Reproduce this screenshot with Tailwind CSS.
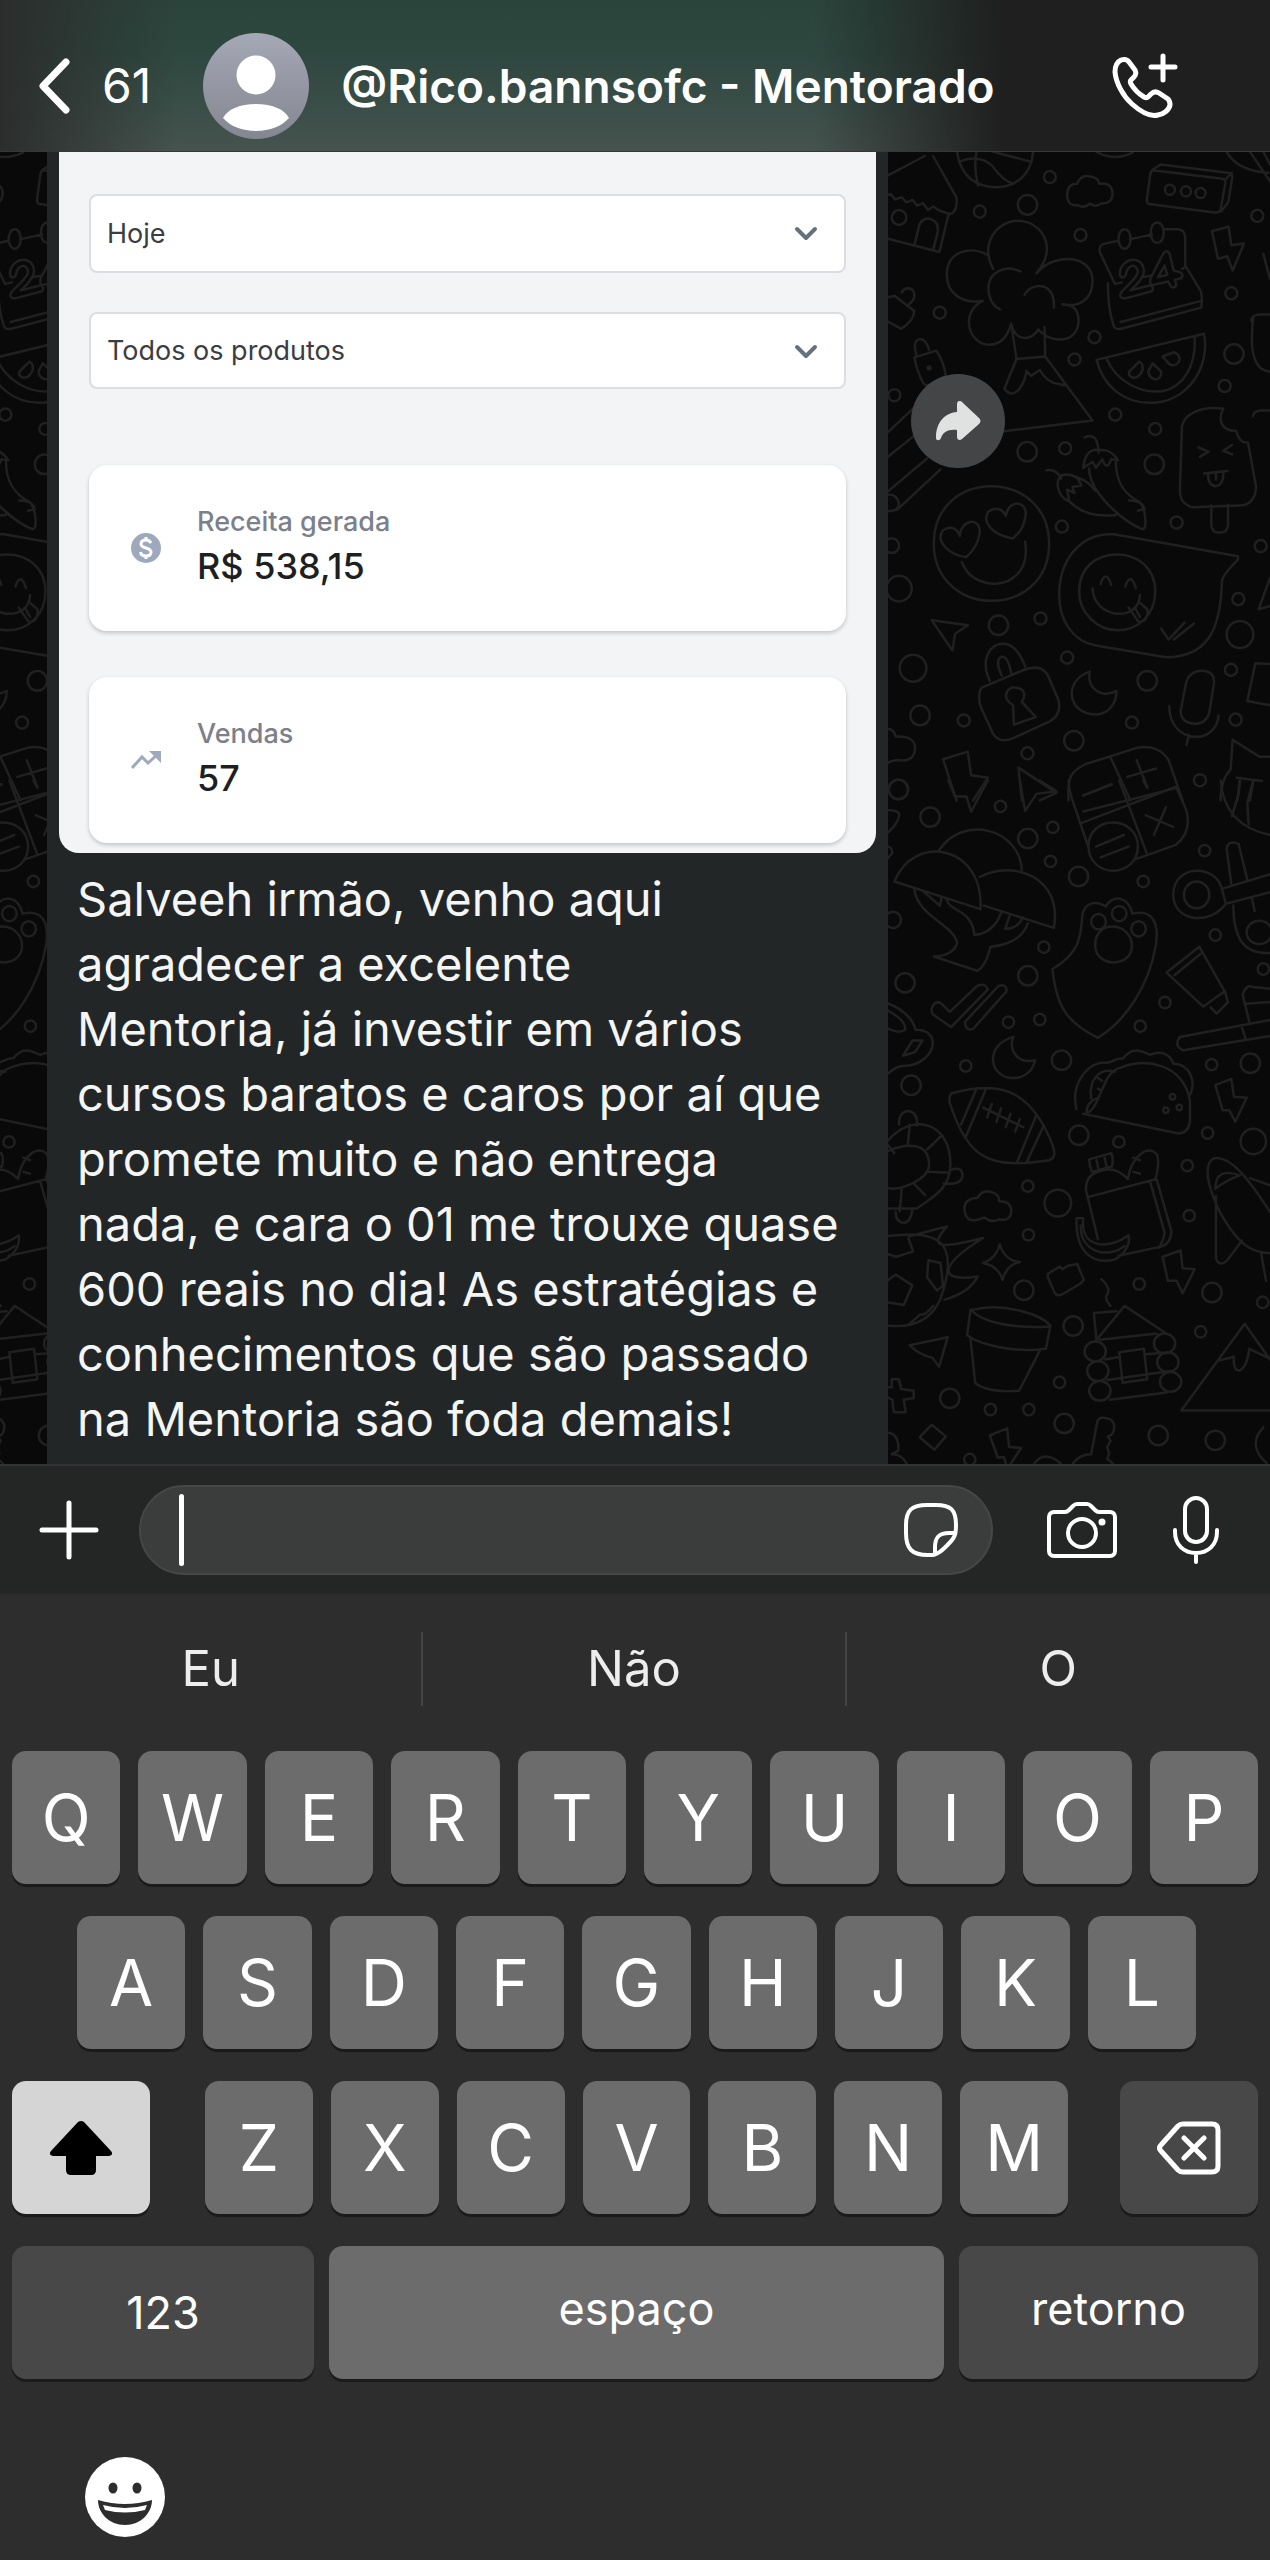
<!DOCTYPE html>
<html lang="pt-BR">
<head>
<meta charset="utf-8">
<meta name="viewport" content="width=device-width, initial-scale=1">
<title>@Rico.bannsofc - Mentorado</title>
<script src="https://cdn.jsdelivr.net/npm/@tailwindcss/browser@4"></script>
</head>
<body class="bg-[#2d2d2d] font-['Inter',sans-serif] text-white">
<div class="flex min-h-screen flex-col">

  <!-- Conversation header -->
  <header class="flex h-[152px] items-center border-b border-[#343837] bg-[linear-gradient(to_right,#2b2d2c_0%,transparent_14%,transparent_64%,#1f1f1f_79%),linear-gradient(to_bottom,#2b443b_0%,#2d473f_35%,#46534f_100%)] pt-5 pr-[92px] pl-[38px]">
    <a href="#" class="flex items-center gap-8" aria-label="Voltar, 61 conversas">
      <svg class="h-14 w-8" viewBox="0 0 32 56" fill="none" stroke="#fff" stroke-width="7" stroke-linecap="round" stroke-linejoin="round"><path d="M28 4 5 28l23 24"/></svg>
      <span class="text-[48px] leading-none">61</span>
    </a>
    <svg class="ml-[52px] size-[106px] shrink-0" viewBox="0 0 106 106">
      <defs><linearGradient id="av" x1="0" y1="0" x2="0" y2="1"><stop offset="0" stop-color="#a5a8b5"/><stop offset="1" stop-color="#848791"/></linearGradient></defs>
      <circle cx="53" cy="53" r="53" fill="url(#av)"/>
      <circle cx="53" cy="42" r="19.500" fill="#fff"/>
      <path d="M20 85c5-9 17-14 33-14s28 5 33 14c-7 8-19 13-33 13s-26-5-33-13z" fill="#fff"/>
    </svg>
    <h1 class="ml-8 flex-1 text-[46px] leading-none font-semibold whitespace-nowrap">@Rico.bannsofc - Mentorado</h1>
    <button aria-label="Ligar" class="size-[66px] shrink-0">
      <svg viewBox="0 0 66 66" fill="none" stroke="#fff" stroke-width="5" stroke-linecap="round" stroke-linejoin="round">
        <path d="M51 3v24M39 14h24"/>
        <path d="M9 7C5 9 3 13 3 19c1 11 8 24 17 32 9 8 19 13 26 11 6-1 11-5 12-10 0-3 0-4-2-6l-9-6c-3-2-6-1-8 1l-3 3c-1 1-2 1-4 0-5-3-10-8-13-13-1-2-1-3 0-4l3-3c2-2 2-5 1-7l-6-8c-2-3-5-3-8-2z"/>
      </svg>
    </button>
  </header>

  <!-- Messages -->
  <main class="relative flex overflow-hidden bg-[#090909] pl-[47px]">
    <svg id="wall" class="absolute inset-0 size-full" viewBox="0 152 1270 1311" preserveAspectRatio="xMaxYMin slice" fill="none" stroke="#202020" stroke-width="2.500" stroke-linejoin="round" stroke-linecap="round" aria-hidden="true">
      <g id="tile">
        <g id="upper" transform="translate(870 140) scale(.33333 .42091)">
          <path vector-effect="non-scaling-stroke" d="M52 85 165 38M190 38l70 98q5 35-20 40l-30-8-20-10-15 8-15-16-18 6-14-14-18 6-14-12-20 5-12-12-14 2M52 234l157 32 28-92M135 246l14-45q12-20 38-12 22 8 16 32l-12 38M262 28c10 60 60 84 118 84s105-30 110-84M325 108q-14-40-5-80M268 52q60-20 100 10 30 34 62 42M370 28l115 24M680 28q50 24 108 2M1070 28q30 44 125 50M1140 28l60 70M1180 28l20 30"/>
          <path vector-effect="non-scaling-stroke" d="M592 130q0-26 30-26 10-22 36-18 28 2 30 18 38-4 40 22 0 26-34 25-18 10-35 0-14 12-34 4-34 2-33-25zM848 72l210 20q10 2 8 12l-14 60q-4 10-20 8L838 152q-8-2-7-12l10-58q2-10 12-14l20-10 200 20q16 2 14 10l-12 60-22 22M1066 94l20-16"/>
          <path vector-effect="non-scaling-stroke" d="M370 306c-40-60 10-114 75-114s125 60 55 124M356 274c-50-24-125-12-125 46 0 46 50 70 108 62M338 382c-70 30-40 104 20 104 34 0 56-20 66-50 14 46 60 40 82 14 40 38 120 30 120-20 0-30-20-40-48-40 60 10 90-20 90-56 0-60-110-70-168-18M452 312c-50-18-96 4-96 40 0 24 14 44 36 50M464 368c24-34 94-30 88 30M425 440l15 80-36 70q20 24 46 0 18-22 20-42l14 12 26-14q20 30 60 34l14 2M440 520l86-6-2-70M526 514l142 152-270 26"/>
          <path vector-effect="non-scaling-stroke" d="m735 342-45-76q-4-18 16-20l36-6M780 236l66-12M884 212h40q20 0 22 20v66l46 60q6 12 2 40l-240 50q-20 4-24-10-16-40-16-98M735 342l20-4M815 326l30-4M936 306l10-4M752 432l242-50M764 212c24 0 24 46 0 46s-24-46 0-46zM862 196c26 0 26 48 0 48s-26-48 0-48z"/>
          <path vector-effect="non-scaling-stroke" d="M750 317c0-36 68-48 72-6 0 16-20 32-40 46l60-12q12 4 4 14l-80 17q-22 0-12-14c20-20 46-32 50-48-4-24-32-18-36 6-6 10-18 8-18-3zM880 270l-38 58q-4 18 8 16l45-8 8 12q10 6 16-4l-4-12 20-4q6-10-4-14l-20-4-12-40q-10-12-19 0zM884 298l-20 28 28-6z"/>
          <path vector-effect="non-scaling-stroke" d="m1026 216 50-10 8 44 38-4-34 64-16-34-28 6zM680 522l322-62c20 80-50 164-162 164-80 0-140-40-160-102zM710 520c30 52 100 84 170 76 60-10 100-60 94-130M778 550l30-24q12 4 10 20-10 20-30 18-14-4-10-14zM848 530l26 20q0 20-20 18-20-6-18-20zM878 514l34-10q20 6 16 20-10 16-30 8z"/>
          <path vector-effect="non-scaling-stroke" d="m52 374 22-4 60 36q-2 24-40 42l-42-18M96 362q10-14 30-8 14 10 4 26l-14 12M134 516l66-16q24 30 28 60l-40 20q-18 8-28-4-20-30-26-60zM140 510q-12-30 6-36 20-6 32 24M52 696l80-60M52 754l110-70M52 836l120-80M82 878l130-96M52 842q30-2 36 22-4 20-36 16"/>
          <path vector-effect="non-scaling-stroke" d="M192 958c0-86 80-136 172-136s174 50 174 136-80 136-172 136S192 1044 192 958zM290 990c-60-6-90-40-72-62 20-14 44-8 52 12 4-40 62-46 60-8-4 24-20 44-40 58zM428 946c-70-10-90-44-72-64 24-14 44-4 52 10 8-38 60-38 60-4-6 34-20 46-40 58zM276 1002c30 60 120 60 152 38 40-20 44-54 38-86"/>
          <path vector-effect="non-scaling-stroke" d="M644 706q40-14 42 36M640 778q6-50 56-42 30 0 48 24l-20-2q-14 30-26 0l-20 20-10-14zM658 780c0 60 110 130 160 144 16 0 8-50-8-64-50-20-72-50-72-96M778 856q40 0 46 20l-20 4M530 784q30-4 44 20M598 858c-40-12-46-60-14-64q40-2 50 26l-26 4 6 14-22-8zM598 858q50 40 140 32M584 794q60 4 92 38"/>
          <path vector-effect="non-scaling-stroke" d="M936 680c6-30 60-50 124-42-20 30 0 54 38 52 8 20 16 30 36 28l24 104c0 30-20 46-50 46l-140 4q-38-8-38-40zM1024 868v44q0 20 24 20 26 0 26-20v-46M986 730l30 10-26 12M1086 724l-26 14 26 8M1002 792l70-6M1014 792q0 30 24 30 24-4 22-34M1038 790v16"/>
          <path vector-effect="non-scaling-stroke" d="m1104 988-372-52c-110-4-164 70-164 144 0 60 40 110 110 120l210 28c120 0 164-60 168-180q0-14 48-52zM628 1072c0-60 56-88 114-88s114 30 114 88-56 92-114 92-114-40-114-92zM692 1054q16-36 32 2M766 1060q16-36 32 4M668 1064c4 74 140 82 142 16M776 1110l30 34q30 0 26-30l-20-14M796 1112l14 20M874 1160l22 26 48-40M912 1186l60-38"/>
          <path vector-effect="non-scaling-stroke" d="M186 1140l108 12-38 20-8 40zM360 1284c-30-50 0-88 40-88 30 0 50 20 66 54M396 1272c-30-50 10-56 20-30l10 26M336 1300l120-40q60-20 80 14l30 56q10 34-26 50l-110 40q-40 14-60-10l-38-66q-10-30 4-44zM430 1342c-40-20-14-44 4-42 34 0 34 20 22 34l42 36-66 18zM660 1262c-80 20-70 102 20 102 40-2 60-30 60-56-50 20-90-10-80-46zM948 1290q10-30 48-30 38 0 36 30l-14 70q-10 26-44 26-40-2-42-30zM898 1344c0 90 140 96 148 22M956 1412l-6 24M1200 1244l-44-2-24 90 68 10"/>
          <path vector-effect="non-scaling-stroke" d="m220 1470 74-18 10 56 50 6-44 54M220 1470l40 98M446 1490l114 60-50 18M446 1490l10 78M596 1568c-4-60 10-70 50-86l160-40q60-6 90 30l42 96M722 1466l60 102M640 1556l86-26M772 1512l86-20M800 1472l32 64M640 1594l280-56M52 1398q20 0 26 18 58-2 58 28-2 34-50 28-20 0-34 8M1052 1568q0-50 30-74l6-70 80 40h32M1100 1514l76 8M1110 1516l-8 52M1150 1520l-10 48M1200 550q-70-4-50-130M1144 430q0-16 30-16h26M1148 656q4-14 26-14h26M1180 270l20 60M1200 1040l-34 74 34-8"/>
        </g>
        <g id="lower" transform="translate(870 780) scale(.33333 .44643)">
          <path vector-effect="non-scaling-stroke" d="m236 0 20 36h34l14 34 50-70M450 0l16 68 34-38 60-6-50-24M596 0q0 20 10 40l50 110M632 96l286-82M748 0l82 162M640 34l84-26M820 0l12 16M918 14l30 50q20 50-30 80l-120 32M828 78l82 26M888 60l-36 62M656 148c0-36 36-54 74-54s74 20 74 54-36 54-74 54-74-20-74-54zM678 148l84-26M692 172l84-24M1052 0q10 100 148 122M1110 0l-4 30-20 50M1150 0l-18 50 4 48"/>
          <path vector-effect="non-scaling-stroke" d="M208 156c70-80 240-50 248 44M74 226c60-110 270-80 258 62zM330 216c100-40 250 0 222 114l-210-50M134 244c10 60 120 80 128 120-6 20-40 30-70 30l130 32q26-10 40-54 90-6 112-52M160 248l50 32 6-18M230 266c10 30 76 20 84 80 50-4 70-30 80-50M420 302l-14 30q40 0 52-26M52 66q40 0 36 14-6 20-36 38M52 148q14 0 16 14l-16 14"/>
          <path vector-effect="non-scaling-stroke" d="M548 422c90-40 84-80 90-124 10-26 40-30 70-16 20-26 66-26 80 16 60-10 80 20 70 70-20 90-90 170-174 208-80-30-124-60-136-154zM676 368c0-60 110-50 110 2 0 50-110 50-110-2z"/>
          <path vector-effect="non-scaling-stroke" d="M664 316a22 17 0 1 0 44 0 22 17 0 1 0-44 0M726 298a22 17 0 1 0 44 0 22 17 0 1 0-44 0M784 332a22 17 0 1 0 44 0 22 17 0 1 0-44 0M942 256a38 30 0 1 0 76 0 38 30 0 1 0-76 0M1130 340a38 26 0 1 0 76 0 38 26 0 1 0-76 0M910 256c0-70 130-70 146-12l12 32c-50 50-158 40-158-20zM1058 242l142-32M1068 276l132-26M1084 232l-14-80q4-20 36-10l26 80M1090 280c0 60 20 110 110 106M1146 264l8 28"/>
          <path vector-effect="non-scaling-stroke" d="m890 430 98-58 76 100-64 34zM914 436l78-48M1064 470l10 26-34 26-18-14M930 574l270-38M930 574q-20 20 10 30l260-32M1114 548l12 28M1138 540l-20-60q10-24 30-18l52 4M1126 500l74-4M186 510q10-20 30-10l24 18 82-58q26-8 32 8l-110 84-54-28q-6-6-4-14zM286 540l100-80q26-6 24 12l-100 84q-24 6-24-16z"/>
          <path vector-effect="non-scaling-stroke" d="M52 498q70 20 86 60c80 0 60 70-20 80-40 0-50 10-66 20M52 514q60 24 54 44-20 10-54-4M100 616l28-34h30l-22 26zM430 574c-90 20-70 92 0 92 40 0 60-20 66-40-50 10-80-20-66-52z"/>
          <path vector-effect="non-scaling-stroke" d="M246 700c120-24 230-24 302 116 10 20 6 30-10 34-180 20-240 0-298-128q-4-16 6-22zM320 690l-46 80M350 688l-62 110M498 752l-56 102M522 772l-50 80M340 732l120 44M366 724l-14 30M394 734l-14 30M422 746l-14 30M450 758l-14 28"/>
          <path vector-effect="non-scaling-stroke" d="M620 736c-20-60 40-110 90-104 20 0 20-10 50-10 30-30 60-14 80-8 30-10 60-4 70 20 50 0 70 40 50 70M640 746c50 0 50-80 100-100 90-30 200-10 220 70v48q-6 26-34 26zM736 652c-50-10-80 20-72 60M650 744c0-20 20-30 36-34M682 664l14 8M684 690l12 4"/>
          <path vector-effect="non-scaling-stroke" d="M52 808c80-70 190-40 190 50 0 60-60 76-100 100H52M52 830c60-20 126-20 126 30 0 30-80 60-126 52M120 770l-6 48M214 796l-42 30M176 876l64 2M132 902l34 26M96 916l-6 48M52 814l22 20M88 770q0-30 30-30 26 4 24 32M240 872q40-10 38 14-4 20-56 16M78 966q0 24 26 24 20-2 24-30"/>
          <path vector-effect="non-scaling-stroke" d="M284 956q2-20 40-22 14-20 44-12 20 4 20 20 40 0 36 26-6 20-36 14-20 10-44-4-60 20-60-22zM52 1020c120-10 232-10 160 140q-40 70-160 60M52 1060l28 6 50-12-14-30M52 1120l26-14 50 24-26 44-50-6M176 1074l36 6 8 50-18 12-30-30zM120 1216l30-20q20 0 40-20M120 1020l112-22c-60 50-20 50 108 26-130 60-140 100-16 86-20 30-60 44-100 52M390 1038q14 36 60 40-40 6-52 40-10-30-58-38 40-10 50-42z"/>
          <path vector-effect="non-scaling-stroke" d="m658 848 66-14q8 14 2 30l-60 12q-8-14-8-28zM680 850l6 20M704 844l6 20M684 1026l-36-110q0-30 30-38 54-20 96 14M656 932l204-40 44 116q0 30-34 36l-124 20M840 896l44 116q-4 20-18 34M774 892c10-50 60-80 88-54 8 20 0 40-6 56M810 850l-20-6M810 880l-20-4M620 980h20c-10 70 80 70 136 38 6 20-10 40-40 54-60 12-120-10-116-92zM632 996c0 60 80 76 132 46"/>
          <path vector-effect="non-scaling-stroke" d="m534 1104 36-16 8 6 16-8 28-4 20 36-10 8-54 24q-18 6-24-4l-20-34zM694 1116q30 20 18 34-10 10 10 26M878 1066l54-14 6 40 36 2-36 54-18-28h-26zM302 1186c100-20 210 10 240 34l-14 52c-100 10-200-10-236-30zM304 1184c30 30 140 44 236 38M302 1248l14 100c30 20 90 20 132 18l62-90"/>
          <path vector-effect="non-scaling-stroke" d="m680 1252-8-60 68-4M678 1254l86-78 130 64M690 1252l170-14M706 1296l44-6M712 1342l190-20M720 1386l170-16M826 1284l40-2M748 1280l74-8 10 68-74 8zM644 1278a32 22 0 1 0 64 0 32 22 0 1 0-64 0M652 1322a32 22 0 1 0 64 0 32 22 0 1 0-64 0M658 1366a32 22 0 1 0 64 0 32 22 0 1 0-64 0M852 1260a32 22 0 1 0 64 0 32 22 0 1 0-64 0M862 1302a32 22 0 1 0 64 0 32 22 0 1 0-64 0M870 1346a32 22 0 1 0 64 0 32 22 0 1 0-64 0M1200 1410H934l190-194 76 80M1050 1298l42-8q-4 34 20 30 20-10 26-48l62 22"/>
          <path vector-effect="non-scaling-stroke" d="M1200 966c-60-70-120-130-170-120-40 20 0 90 20 120 60 80 100 90 150 92M1038 930v140q10 20 34 4l44-44M1036 914q0-50 74-30-40 10-74 30zM1140 890l60 16M1174 1060l14 60M120 1264l114-18-26 66-20-20q-40-6-68-28zM52 1358h14v-18h22l6 22 38 4v16l-30 4 6 28H72l-4-28-16-6M186 1442l42 26-34 30-44-28zM360 1466l52-16 6 42 36 2-32 36M360 1466l24 50 18-2 6 14M610 1528q20-20 54-20l18-72q6-16 40-6 20 14 4 34l-12 4 8 10-10 14 6 14-6 12 16 10M52 1460q36 0 34 40l-20 8q30 0 44 20M494 1528q30-30 78 0M1180 1448q-50 40 10 80M1036 682l48-14 8 40 38 2-34 54-18-26h-20z"/>
        </g>
      </g>
      <use href="#tile" x="-1109"/>
    </svg>

    <article class="relative min-w-0 flex-1 bg-[#232627] px-3">
      <div class="rounded-b-[20px] bg-[#f2f4f6] px-[30px] pt-[42px] pb-[10px] text-[#3b3d42]">
        <div class="relative">
          <select id="periodo" aria-label="Período" class="h-[79px] w-full appearance-none rounded-lg border-2 border-[#dcdde1] bg-white px-4 pt-[2px] text-[27px]"><option>Hoje</option></select>
          <svg class="pointer-events-none absolute top-8 right-7 h-4 w-6" viewBox="0 0 24 16" fill="none" stroke="#667180" stroke-width="4" stroke-linecap="round" stroke-linejoin="round"><path d="m3 3 9 9 9-9"/></svg>
        </div>
        <div class="relative mt-[39px]">
          <select id="produto" aria-label="Produto" class="h-[77px] w-full appearance-none rounded-lg border-2 border-[#dcdde1] bg-white px-4 pt-[2px] text-[27px]"><option>Todos os produtos</option></select>
          <svg class="pointer-events-none absolute top-8 right-7 h-4 w-6" viewBox="0 0 24 16" fill="none" stroke="#667180" stroke-width="4" stroke-linecap="round" stroke-linejoin="round"><path d="m3 3 9 9 9-9"/></svg>
        </div>
        <dl class="mt-[76px] grid gap-[46px]">
          <div class="flex h-[166px] items-center gap-9 rounded-[18px] bg-white pl-[42px] shadow-[0_2px_4px_#0003]">
            <svg class="size-[30px]" viewBox="0 0 30 30"><circle cx="15" cy="15" r="15" fill="#9ea9bd"/><path d="M20 10c-1-2-3-3-5-3-3 0-5 1.500-5 4 0 5 10 3 10 8 0 2.500-2 4-5 4s-5-1-5.500-4M15 4v4M15 22v4" fill="none" stroke="#fff" stroke-width="3"/></svg>
            <div>
              <dt class="text-[27px] leading-9 font-medium text-[#7b808b]">Receita gerada</dt>
              <dd class="text-[36px] leading-[52px] font-medium text-[#1e1f22]">R$ 538,15</dd>
            </div>
          </div>
          <div class="flex h-[166px] items-center gap-9 rounded-[18px] bg-white pl-[42px] shadow-[0_2px_4px_#0003]">
            <svg class="size-[30px]" viewBox="0 0 30 30" fill="none" stroke="#9ea9bd" stroke-width="3"><path d="m1 23 10-11 6 6L28 8"/><path d="M18 6h12v12z" fill="#9ea9bd" stroke="none"/></svg>
            <div>
              <dt class="text-[27px] leading-9 font-medium text-[#7b808b]">Vendas</dt>
              <dd class="text-[36px] leading-[52px] font-medium text-[#1e1f22]">57</dd>
            </div>
          </div>
        </dl>
      </div>
      <p class="pt-[13px] pb-[13px] pl-[18px] text-[47px] leading-[65px] whitespace-nowrap text-[#f4f5f5]">Salveeh irmão, venho aqui<br>agradecer a excelente<br>Mentoria, já investir em vários<br>cursos baratos e caros por aí que<br>promete muito e não entrega<br>nada, e cara o 01 me trouxe quase<br>600 reais no dia! As estratégias e<br>conhecimentos que são passado<br>na Mentoria são foda demais!</p>
    </article>

    <div class="relative w-[382px] shrink-0 pt-[222px] pl-[23px]">
      <button aria-label="Encaminhar" class="flex size-[94px] items-center justify-center rounded-full bg-[#444547]">
        <svg class="h-10 w-[46px]" viewBox="0 0 46 40" fill="#e0e2e2"><path d="M1 37C1 22 9 12 22 11V3c0-3 3-4 5-2l17 16c2 2 2 4 0 6L27 38c-2 2-5 1-5-2v-7C13 28 8 31 6 37c-1 3-5 3-5 0z"/></svg>
      </button>
    </div>
  </main>

  <!-- Composer -->
  <form class="flex h-[130px] items-center border-t-2 border-[#303434] bg-[#232625] pr-[51px] pl-[39px]">
    <button type="button" aria-label="Anexar" class="size-[60px]"><svg viewBox="0 0 60 60" stroke="#fff" stroke-width="5" stroke-linecap="round"><path d="M30 3v54M3 30h54"/></svg></button>
    <div class="relative ml-10 flex-1">
      <input id="msg" type="text" aria-label="Mensagem" class="block h-[90px] w-full rounded-full border-2 border-[#454746] bg-[#3b3c3c] pr-28 pl-12 text-[46px] outline-none">
      <span class="absolute top-[9px] left-10 h-[72px] w-[5px] rounded-full bg-white"></span>
      <button type="button" aria-label="Figurinhas" class="absolute top-[17px] right-[34px] size-14">
        <svg viewBox="0 0 56 56" fill="none" stroke="#fff" stroke-width="4" stroke-linejoin="round"><path d="M30 53h-5C9 53 3 47 3 31V23C3 8 9 3 24 3h9c15 0 20 5 20 20 0 6 0 9-2 12-2 4-12 14-16 16-2 1-3 2-5 2z"/><path d="M52 31h-6c-10 0-14 4-14 14v8"/></svg>
      </button>
    </div>
    <button type="button" aria-label="Câmera" class="ml-[54px] h-[58px] w-[70px]">
      <svg viewBox="0 0 70 58" fill="none" stroke="#fff" stroke-width="4" stroke-linejoin="round"><path d="M7 11h11c2 0 3-1 4-2l4-4c1-1 2-2 4-2h10c2 0 3 1 4 2l4 4c1 1 2 2 4 2h11c3 0 5 2 5 5v34c0 3-2 5-5 5H7c-3 0-5-2-5-5V16c0-3 2-5 5-5z"/><circle cx="35" cy="32" r="14"/><circle cx="55" cy="21" r="3.500" fill="#fff" stroke="none"/></svg>
    </button>
    <button type="button" aria-label="Gravar áudio" class="ml-14 h-[68px] w-[46px]">
      <svg viewBox="0 0 46 68" fill="none" stroke="#fff" stroke-width="4" stroke-linecap="round"><rect x="12" y="2" width="22" height="44" rx="11"/><path d="M2 34v2c0 13 9 21 21 21s21-8 21-21v-2M23 57v9"/></svg>
    </button>
  </form>

  <!-- On-screen keyboard -->
  <section aria-label="Teclado" class="flex-1 px-3 pt-[38px] pb-5">
    <div class="-mx-3 grid grid-cols-3 divide-x-2 divide-[#454545] *:h-[74px] *:text-[49px] *:text-[#ededed]">
      <button>Eu</button><button>Não</button><button>O</button>
    </div>
    <div class="mt-[45px] flex flex-col gap-8 text-[64px]">
      <div class="flex gap-[18px] *:h-[133px] *:flex-1 *:rounded-[14px] *:bg-[#6c6c6c] *:shadow-[0_3px_0_#1b1b1b]">
        <button>Q</button><button>W</button><button>E</button><button>R</button><button>T</button><button>Y</button><button>U</button><button>I</button><button>O</button><button>P</button>
      </div>
      <div class="flex gap-[18px] pr-[62px] pl-[65px] *:h-[133px] *:flex-1 *:rounded-[14px] *:bg-[#6c6c6c] *:shadow-[0_3px_0_#1b1b1b]">
        <button>A</button><button>S</button><button>D</button><button>F</button><button>G</button><button>H</button><button>J</button><button>K</button><button>L</button>
      </div>
      <div class="flex">
        <button aria-label="Maiúsculas" class="flex h-[133px] w-[138px] items-center justify-center rounded-[14px] bg-[#d5d5d5] shadow-[0_3px_0_#1b1b1b]">
          <svg class="h-[54px] w-[62px]" viewBox="0 0 62 54"><path d="M28 1q3-2 6 0l27 29q3 4-2 5H46v14q0 5-5 5H21q-5 0-5-5V35H3q-5-1-2-5z"/></svg>
        </button>
        <div class="mr-[52px] ml-[55px] flex flex-1 gap-[18px] *:h-[133px] *:flex-1 *:rounded-[14px] *:bg-[#6c6c6c] *:shadow-[0_3px_0_#1b1b1b]">
          <button>Z</button><button>X</button><button>C</button><button>V</button><button>B</button><button>N</button><button>M</button>
        </div>
        <button aria-label="Apagar" class="flex h-[133px] w-[138px] items-center justify-center rounded-[14px] bg-[#484848] shadow-[0_3px_0_#1b1b1b]">
          <svg class="h-[54px] w-16" viewBox="0 0 64 54" fill="none" stroke="#fff" stroke-width="5" stroke-linecap="round" stroke-linejoin="round"><path d="M26 3h29q6 0 6 6v36q0 6-6 6H26q-3 0-5-2L4 30q-3-3 0-6L21 5q2-2 5-2zM27 17l20 20M47 17 27 37"/></svg>
        </button>
      </div>
      <div class="flex gap-[15px] text-[45px] *:h-[133px] *:rounded-[14px] *:shadow-[0_3px_0_#1b1b1b]">
        <button class="w-[302px] bg-[#484848]">123</button>
        <button class="flex-1 bg-[#6c6c6c] pb-2">espaço</button>
        <button class="w-[299px] bg-[#484848] pb-2">retorno</button>
      </div>
    </div>
    <button aria-label="Emojis" class="mt-[78px] ml-[73px] block size-20">
      <svg viewBox="0 0 80 80"><circle cx="40" cy="40" r="40" fill="#fff"/><ellipse cx="28" cy="31" rx="4.500" ry="5.500" fill="#2d2d2d"/><ellipse cx="52" cy="31" rx="4.500" ry="5.500" fill="#2d2d2d"/><path d="M13 43q27 8 54 0c0 13-11 25-27 25S13 56 13 43z" fill="#2d2d2d"/><path d="M18 48q22 6 44 0l-2 5q-20 5-40 0z" fill="#fff"/></svg>
    </button>
  </section>
</div>

<script>
  // Scattered rings of the wallpaper: [x, y, horizontal radius]
  const rings = {
    upper: [[540,88,18],[473,154,29],[330,170,18],[88,184,22],[900,118,15],[948,122,15],[992,126,15],[1162,180,18],[632,226,18],[1084,364,18],[210,410,18],[674,468,18],[614,521,18],[1092,508,29],[1064,584,18],[74,606,18],[736,652,18],[856,686,18],[472,740,29],[586,732,18],[853,770,29],[576,918,18],[920,908,18],[66,963,22],[1172,964,18],[88,1065,38],[386,1152,29],[512,1136,18],[1105,1090,18],[1110,1174,40],[130,1254,40],[592,1229,18],[1083,1258,18],[832,1284,29],[151,1366,29],[282,1378,18],[786,1383,18],[1097,1376,18],[612,1426,29],[473,1456,18],[990,1520,18],[86,1542,29],[178,541,4]],
    lower: [[86,20,29],[181,82,29],[392,58,17],[474,130,29],[549,105,17],[542,181,17],[626,215,29],[820,226,17],[1004,157,17],[70,312,24],[522,373,17],[1036,346,17],[1180,422,17],[106,453,29],[474,437,29],[885,497,17],[416,541,17],[510,535,17],[811,550,17],[575,626,29],[288,639,17],[1025,636,17],[1141,633,29],[124,682,29],[627,794,29],[747,809,17],[1013,789,17],[1150,808,38],[952,862,17],[474,908,17],[564,946,40],[958,974,17],[476,1017,17],[462,1141,29],[808,1127,17],[1026,1146,29],[1178,1168,17],[610,1221,29],[992,1234,17],[569,1347,17],[240,1383,29],[362,1408,17],[477,1408,17],[583,1439,29],[865,1466,29],[1036,1477,29],[300,1520,17],[908,708,8],[888,738,8],[928,732,8]]
  };
  for (const [id, list] of Object.entries(rings)) {
    const g = document.getElementById(id);
    const ratio = id === 'upper' ? .8 : .75;
    for (const [x, y, r] of list) {
      const e = document.createElementNS('http://www.w3.org/2000/svg', 'ellipse');
      e.setAttribute('cx', x); e.setAttribute('cy', y);
      e.setAttribute('rx', r); e.setAttribute('ry', r * ratio);
      e.setAttribute('vector-effect', 'non-scaling-stroke');
      g.append(e);
    }
  }
</script>
</body>
</html>
